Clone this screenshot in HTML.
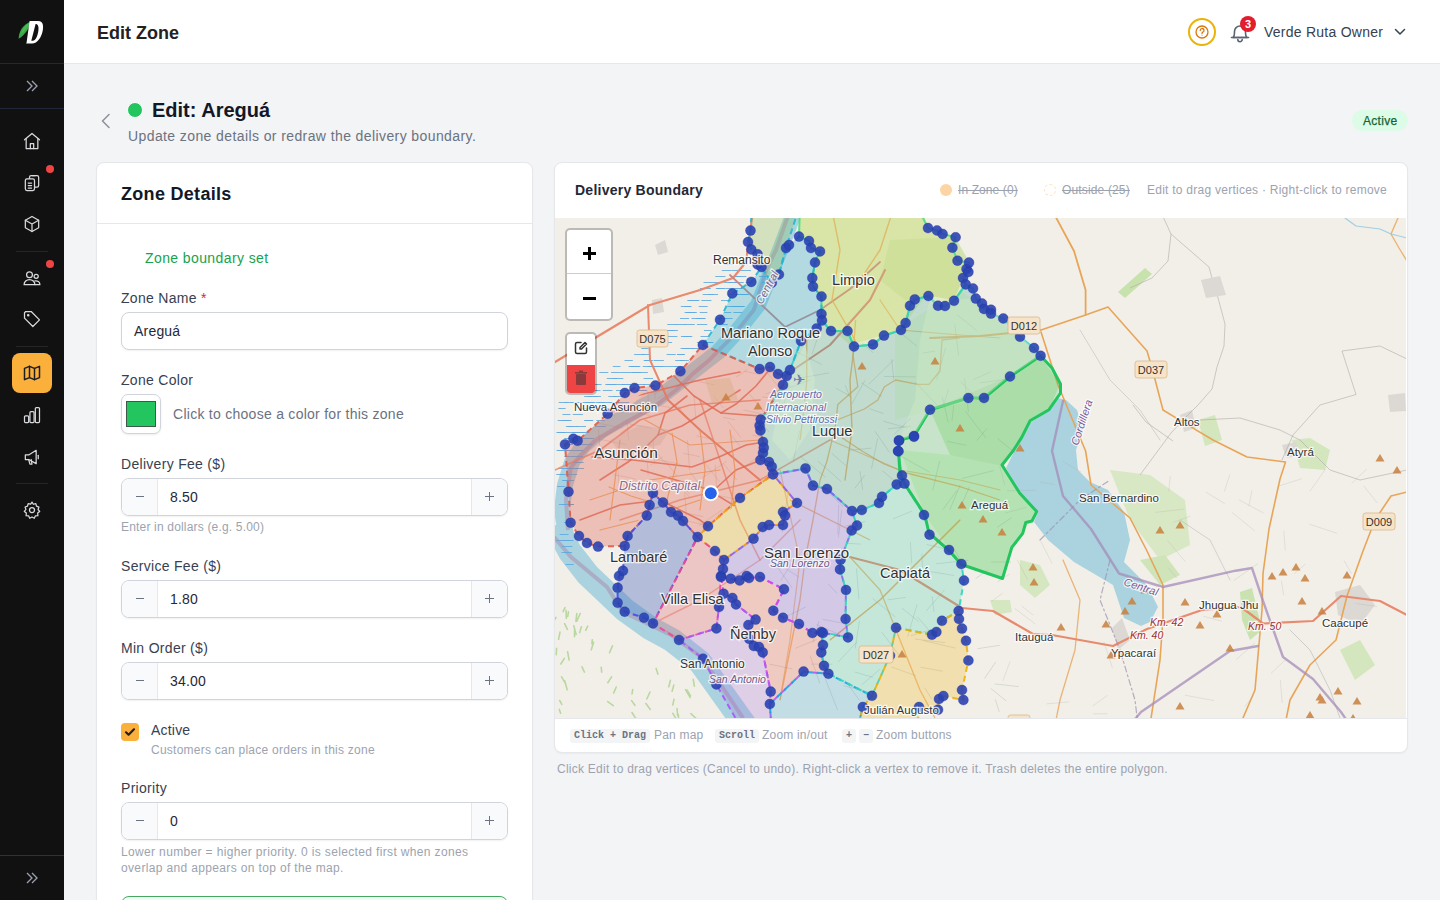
<!DOCTYPE html>
<html><head><meta charset="utf-8">
<style>
*{box-sizing:border-box;margin:0;padding:0}
html,body{width:1440px;height:900px;overflow:hidden;background:#f3f4f6;font-family:"Liberation Sans",sans-serif;color:#374151}
.abs{position:absolute}
#side{position:absolute;left:0;top:0;width:64px;height:900px;background:#111111}
.sdiv{position:absolute;left:0;width:64px;height:1px;background:#1f2937}
.sgd{position:absolute;left:16px;width:32px;height:1px;background:#262626}
.ico{position:absolute;left:22px;width:20px;height:20px}
.rdot{position:absolute;left:46px;width:8px;height:8px;border-radius:50%;background:#ef4444}
#hdr{position:absolute;left:64px;top:0;width:1376px;height:64px;background:#fff;border-bottom:1px solid #e5e7eb}
.t{position:absolute;white-space:nowrap;line-height:1}
.card{position:absolute;background:#fff;border:1px solid #e5e7eb;border-radius:8px;box-shadow:0 1px 2px rgba(0,0,0,.04)}
.lbl{position:absolute;left:24px;font-size:14px;color:#374151;white-space:nowrap;line-height:1}
.inp{position:absolute;left:24px;width:387px;height:38px;border:1px solid #d1d5db;border-radius:8px;background:#fff;box-shadow:0 1px 2px rgba(0,0,0,.06)}
.stp{position:absolute;left:24px;width:387px;height:38px;border:1px solid #d1d5db;border-radius:8px;background:#fff;box-shadow:0 1px 2px rgba(0,0,0,.06);overflow:hidden}
.stp .m,.stp .p{position:absolute;top:0;width:36px;height:36px;background:#f9fafb}
.stp .m{left:0;border-right:1px solid #e5e7eb}
.stp .p{right:0;border-left:1px solid #e5e7eb}
.hint{position:absolute;left:24px;font-size:12px;color:#9ca3af;white-space:nowrap;line-height:16px}
kbd{display:inline-block;font-family:"Liberation Mono",monospace;font-weight:bold;font-size:10px;line-height:14px;height:14px;color:#6b7280;background:#f3f4f6;border-radius:3px;padding:0 4px;vertical-align:top;letter-spacing:0}
</style></head><body>
<!-- SIDEBAR -->
<div id="side">
  <svg class="abs" style="left:16px;top:18px" width="32" height="30" viewBox="0 0 32 30">
    <path d="M2.6 20.8 C2.8 13 7 6.2 15.2 3.4 C13.5 9.5 9.5 16.5 2.6 20.8 Z" fill="#3aa947"/>
    <path d="M5 16 C6.5 10.5 9.5 6.8 14 4.6 C12 9 9 13 5 16Z" fill="#5cc266" opacity="0.6"/>
    <path fill-rule="evenodd" d="M13.6 3 L22.5 3 C26.5 3 27.6 7 26.9 11.5 C25.9 19 21.5 25.6 16 25.6 L10.2 25.6 L10.6 24.6 Z M19.6 6 C22 6 22.9 8.5 22.4 12.5 C21.7 18 19.5 22.8 16.8 22.8 L15.3 22.8 Z" fill="#fff"/>
  </svg>
  <div class="sdiv" style="top:63px"></div>
  <svg class="abs" style="left:25px;top:79px" width="14" height="14" viewBox="0 0 14 14" fill="none" stroke="#9ca3af" stroke-width="1.3"><path d="M2 2l5 5-5 5M7 2l5 5-5 5"/></svg>
  <div class="sdiv" style="top:108px"></div>
  <svg class="ico" style="top:131px" viewBox="0 0 24 24" fill="none" stroke="#d9dadd" stroke-width="1.5" stroke-linecap="round" stroke-linejoin="round"><path d="M3 10.5 12 3l9 7.5"/><path d="M5 9v12h14V9"/><path d="M10 21v-6h4v6"/></svg>
  <div class="rdot" style="top:165px"></div>
  <svg class="ico" style="top:173px" viewBox="0 0 24 24" fill="none" stroke="#d9dadd" stroke-width="1.5" stroke-linecap="round" stroke-linejoin="round"><rect x="9" y="3" width="11" height="14" rx="2"/><rect x="4" y="7" width="11" height="14" rx="2" fill="#111"/><path d="M7.5 12h4M7.5 15h4M7.5 18h4"/><path d="M12 3h4"/></svg>
  <svg class="ico" style="top:214px" viewBox="0 0 24 24" fill="none" stroke="#d9dadd" stroke-width="1.5" stroke-linecap="round" stroke-linejoin="round"><path d="M12 3 20 7.5v9L12 21 4 16.5v-9Z"/><path d="M4 7.5 12 12l8-4.5M12 12v9"/></svg>
  <div class="sgd" style="top:251px"></div>
  <div class="rdot" style="top:260px"></div>
  <svg class="ico" style="top:268px" viewBox="0 0 24 24" fill="none" stroke="#d9dadd" stroke-width="1.5" stroke-linecap="round" stroke-linejoin="round"><circle cx="9" cy="8" r="3.5"/><circle cx="17" cy="10" r="2.5"/><path d="M2.5 20c0-3.5 3-6 6.5-6s6.5 2.5 6.5 6Z"/><path d="M15.5 15.5c3 -0.5 6 1 6 4.5h-6"/></svg>
  <svg class="ico" style="top:309px" viewBox="0 0 24 24" fill="none" stroke="#d9dadd" stroke-width="1.5" stroke-linecap="round" stroke-linejoin="round"><path d="M3 4.5V11l10 10 8-8L11 3H4.5Z"/><circle cx="7.5" cy="7.5" r="0.8" fill="#e5e7eb"/></svg>
  <div class="sgd" style="top:346px"></div>
  <div class="abs" style="left:12px;top:353px;width:40px;height:40px;border-radius:8px;background:#fbb03b"></div>
  <svg class="ico" style="top:363px" viewBox="0 0 24 24" fill="none" stroke="#1f1f1f" stroke-width="1.8" stroke-linecap="round" stroke-linejoin="round"><path d="M3 6.5 9 4l6 2.5L21 4v13.5L15 20l-6-2.5L3 20Z"/><path d="M9 4v13.5M15 6.5V20"/></svg>
  <svg class="ico" style="top:405px" viewBox="0 0 24 24" fill="none" stroke="#d9dadd" stroke-width="1.5" stroke-linecap="round" stroke-linejoin="round"><rect x="3" y="13" width="5" height="8" rx="1.2"/><rect x="9.5" y="8" width="5" height="13" rx="1.2"/><rect x="16" y="3" width="5" height="18" rx="1.2"/></svg>
  <svg class="ico" style="top:447px" viewBox="0 0 24 24" fill="none" stroke="#d9dadd" stroke-width="1.5" stroke-linecap="round" stroke-linejoin="round"><path d="M4 9.5h4L17 4v16l-9-5H4Z"/><path d="M8 15l1.5 5.5h2.5L11 15"/><path d="M19.5 10v4"/></svg>
  <div class="sgd" style="top:483px"></div>
  <svg class="ico" style="top:500px" viewBox="0 0 24 24" fill="none" stroke="#d9dadd" stroke-width="1.5" stroke-linecap="round" stroke-linejoin="round"><circle cx="12" cy="12" r="3"/><path d="M12 2.5l1.6 2.6 3-.7.8 3 2.9 1.1-1 2.9 1.9 2.4-2.4 1.9.3 3.1-3.1.3-1.3 2.8-2.7-1.5-2.7 1.5-1.3-2.8-3.1-.3.3-3.1L2.8 13.7l1.9-2.4-1-2.9 2.9-1.1.8-3 3 .7Z"/></svg>
  <div class="sdiv" style="top:855px;background:#2b323d"></div>
  <svg class="abs" style="left:25px;top:871px" width="14" height="14" viewBox="0 0 14 14" fill="none" stroke="#9ca3af" stroke-width="1.3"><path d="M2 2l5 5-5 5M7 2l5 5-5 5"/></svg>
</div>

<!-- HEADER -->
<div id="hdr">
  <div class="t" style="left:33px;top:24px;font-size:18px;font-weight:bold;color:#222">Edit Zone</div>
  <div class="abs" style="left:1124px;top:18px;width:28px;height:28px;border-radius:50%;border:2px solid #eab308"></div>
  <svg class="abs" style="left:1131px;top:25px" width="14" height="14" viewBox="0 0 14 14" fill="none" stroke="#d97706" stroke-width="1.3" stroke-linecap="round"><circle cx="7" cy="7" r="6"/><path d="M5.2 5.4a1.9 1.9 0 1 1 2.6 1.8c-.5.2-.8.6-.8 1.1v.3"/><circle cx="7" cy="10.3" r=".5" fill="#d97706" stroke="none"/></svg>
  <svg class="abs" style="left:1166px;top:21px" width="20" height="22" viewBox="0 0 20 22" fill="none" stroke="#5b6270" stroke-width="1.6" stroke-linecap="round" stroke-linejoin="round"><path d="M3 16.5c1.5-1 1.5-2.5 1.5-6a5.5 5.5 0 0 1 11 0c0 3.5 0 5 1.5 6Z"/><path d="M1.5 16.5h17"/><path d="M7.8 18.5a2.2 2.2 0 0 0 4.4 0"/></svg>
  <div class="abs" style="left:1176px;top:16px;width:16px;height:16px;border-radius:50%;background:#e11d2e;color:#fff;font-size:11px;font-weight:bold;text-align:center;line-height:16px">3</div>
  <div class="t" style="left:1200px;top:25px;font-size:14px;color:#374151;letter-spacing:0.25px">Verde Ruta Owner</div>
  <svg class="abs" style="left:1330px;top:28px" width="12" height="8" viewBox="0 0 12 8" fill="none" stroke="#374151" stroke-width="1.5" stroke-linecap="round" stroke-linejoin="round"><path d="M1.5 1.5 6 6l4.5-4.5"/></svg>
</div>

<!-- PAGE HEADER -->
<svg class="abs" style="left:100px;top:113px" width="12" height="16" viewBox="0 0 12 16" fill="none" stroke="#8b919b" stroke-width="1.5" stroke-linecap="round" stroke-linejoin="round"><path d="M9 1.5 2.5 8 9 14.5"/></svg>
<div class="abs" style="left:127px;top:102px;width:16px;height:16px;border-radius:50%;background:#22c55e;border:1.5px solid #fff"></div>
<div class="t" style="left:152px;top:100px;font-size:20px;font-weight:bold;color:#111827">Edit: Areguá</div>
<div class="t" style="left:128px;top:129px;font-size:14px;color:#6b7280;letter-spacing:0.4px">Update zone details or redraw the delivery boundary.</div>
<div class="abs" style="left:1352px;top:110px;width:56px;height:21px;border-radius:11px;background:#dcfce7"></div>
<div class="t" style="left:1363px;top:115px;font-size:12px;color:#166534;letter-spacing:0.3px;-webkit-text-stroke:0.25px #166534">Active</div>

<!-- LEFT CARD -->
<div class="card" style="left:96px;top:162px;width:437px;height:780px"></div>
<div class="abs" style="left:97px;top:223px;width:435px;height:1px;background:#e5e7eb"></div>
<div class="t" style="left:121px;top:185px;font-size:18px;font-weight:bold;color:#111827;letter-spacing:0.3px">Zone Details</div>
<div class="t" style="left:145px;top:251px;font-size:14px;color:#16a34a;letter-spacing:0.4px">Zone boundary set</div>

<div class="t" style="left:121px;top:291px;font-size:14px;color:#374151;letter-spacing:0.3px">Zone Name <span style="color:#dc2626">*</span></div>
<div class="inp" style="left:121px;top:312px"></div>
<div class="t" style="left:134px;top:324px;font-size:14px;color:#1f2937;letter-spacing:0.2px">Areguá</div>

<div class="t" style="left:121px;top:373px;font-size:14px;color:#374151;letter-spacing:0.3px">Zone Color</div>
<div class="abs" style="left:121px;top:394px;width:40px;height:40px;border:1px solid #d1d5db;border-radius:7px;background:#fff;box-shadow:0 1px 2px rgba(0,0,0,.08)"></div>
<div class="abs" style="left:126px;top:401px;width:30px;height:26px;background:#22c55e;border:1px solid #3d5a48"></div>
<div class="t" style="left:173px;top:407px;font-size:14px;color:#6b7280;letter-spacing:0.27px">Click to choose a color for this zone</div>

<div class="t" style="left:121px;top:457px;font-size:14px;color:#374151;letter-spacing:0.3px">Delivery Fee ($)</div>
<div class="stp" style="left:121px;top:478px"><div class="m"></div><div class="p"></div></div>
<div class="t" style="left:170px;top:490px;font-size:14px;color:#1f2937;letter-spacing:0.2px">8.50</div>
<div class="hint" style="left:121px;top:519px;letter-spacing:0.18px">Enter in dollars (e.g. 5.00)</div>

<div class="t" style="left:121px;top:559px;font-size:14px;color:#374151;letter-spacing:0.3px">Service Fee ($)</div>
<div class="stp" style="left:121px;top:580px"><div class="m"></div><div class="p"></div></div>
<div class="t" style="left:170px;top:592px;font-size:14px;color:#1f2937;letter-spacing:0.2px">1.80</div>

<div class="t" style="left:121px;top:641px;font-size:14px;color:#374151;letter-spacing:0.3px">Min Order ($)</div>
<div class="stp" style="left:121px;top:662px"><div class="m"></div><div class="p"></div></div>
<div class="t" style="left:170px;top:674px;font-size:14px;color:#1f2937;letter-spacing:0.2px">34.00</div>

<div class="abs" style="left:121px;top:723px;width:18px;height:18px;border-radius:4px;background:#fbb03b"></div>
<svg class="abs" style="left:121px;top:723px" width="18" height="18" viewBox="0 0 18 18" fill="none" stroke="#1f1f1f" stroke-width="2.2" stroke-linecap="round" stroke-linejoin="round"><path d="M5 9.3l2.6 2.4L13 6.3"/></svg>
<div class="t" style="left:151px;top:723px;font-size:14px;color:#374151;letter-spacing:0.2px">Active</div>
<div class="t" style="left:151px;top:744px;font-size:12px;color:#9ca3af;letter-spacing:0.25px">Customers can place orders in this zone</div>

<div class="t" style="left:121px;top:781px;font-size:14px;color:#374151;letter-spacing:0.3px">Priority</div>
<div class="stp" style="left:121px;top:802px"><div class="m"></div><div class="p"></div></div>
<div class="t" style="left:170px;top:814px;font-size:14px;color:#1f2937">0</div>
<div class="hint" style="left:121px;top:844px;letter-spacing:0.35px">Lower number = higher priority. 0 is selected first when zones<br>overlap and appears on top of the map.</div>
<div class="abs" style="left:121px;top:896px;width:387px;height:40px;border:1px solid #45a862;border-radius:8px;background:#f0fdf4"></div>

<div class="abs" style="left:136px;top:496px;width:8px;height:1.3px;background:#6b7280"></div>
<div class="abs" style="left:485px;top:496px;width:9px;height:1.3px;background:#6b7280"></div>
<div class="abs" style="left:489px;top:492px;width:1.3px;height:9px;background:#6b7280"></div>
<div class="abs" style="left:136px;top:598px;width:8px;height:1.3px;background:#6b7280"></div>
<div class="abs" style="left:485px;top:598px;width:9px;height:1.3px;background:#6b7280"></div>
<div class="abs" style="left:489px;top:594px;width:1.3px;height:9px;background:#6b7280"></div>
<div class="abs" style="left:136px;top:680px;width:8px;height:1.3px;background:#6b7280"></div>
<div class="abs" style="left:485px;top:680px;width:9px;height:1.3px;background:#6b7280"></div>
<div class="abs" style="left:489px;top:676px;width:1.3px;height:9px;background:#6b7280"></div>
<div class="abs" style="left:136px;top:820px;width:8px;height:1.3px;background:#6b7280"></div>
<div class="abs" style="left:485px;top:820px;width:9px;height:1.3px;background:#6b7280"></div>
<div class="abs" style="left:489px;top:816px;width:1.3px;height:9px;background:#6b7280"></div>

<!-- MAP CARD -->
<div class="card" style="left:554px;top:162px;width:854px;height:591px;overflow:hidden"></div>
<div class="t" style="left:575px;top:183px;font-size:14px;font-weight:bold;color:#1f2937;letter-spacing:0.25px">Delivery Boundary</div>
<div class="abs" style="left:940px;top:184px;width:12px;height:12px;border-radius:50%;background:#fdd5a5"></div>
<div class="t" style="left:958px;top:184px;font-size:12px;color:#9ca3af;text-decoration:line-through;letter-spacing:0.1px">In Zone (0)</div>
<div class="abs" style="left:1044px;top:184px;width:12px;height:12px;border-radius:50%;border:1px dashed #fde2c0"></div>
<div class="t" style="left:1062px;top:184px;font-size:12px;color:#9ca3af;text-decoration:line-through;letter-spacing:0.15px">Outside (25)</div>
<div class="t" style="left:1147px;top:184px;font-size:12px;color:#9ca3af;letter-spacing:0.25px">Edit to drag vertices · Right-click to remove</div>
<svg class="abs" style="left:555px;top:218px" width="851" height="500" viewBox="555 218 851 500">
<rect x="555" y="218" width="851" height="500" fill="#f2efe9"/>
<polygon points="800.0,205.0 921.0,205.0 928.0,228.0 955.0,237.0 969.0,262.0 963.0,278.0 954.0,300.0 930.0,290.0 900.0,330.0 850.0,345.0 822.0,320.0 821.0,314.0 821.0,296.0 813.0,287.0 812.0,278.0 815.0,262.0 820.0,251.0 809.0,241.0 799.0,236.0" fill="#dde9bd"/>
<polygon points="895.0,330.0 960.0,290.0 1040.0,355.0 1010.0,376.0 984.0,398.0 930.0,410.0 895.0,420.0" fill="#e6f0d6"/>
<polygon points="890.0,240.0 955.0,237.0 969.0,262.0 963.0,278.0 954.0,300.0 930.0,296.0 905.0,300.0 880.0,280.0" fill="#d2e3ad"/>
<polygon points="930.0,410.0 1010.0,376.0 1040.0,356.0 1060.0,384.0 1049.0,410.0 1030.0,421.0 1013.0,451.0 1003.0,466.0 990.0,470.0 950.0,455.0" fill="#cfe6bd"/>
<polygon points="900.0,450.0 950.0,455.0 1003.0,466.0 1020.0,493.0 1037.0,512.0 1012.0,547.0 1002.0,578.0 960.0,565.0 925.0,515.0" fill="#dcecc9"/>
<polygon points="1240.0,592.0 1252.0,588.0 1262.0,630.0 1250.0,640.0 1242.0,620.0" fill="#c9e2b0"/>
<polygon points="1110.0,470.0 1150.0,475.0 1185.0,500.0 1190.0,545.0 1160.0,560.0 1130.0,520.0" fill="#d8e8c4"/>
<polygon points="1292.0,440.0 1310.0,438.0 1330.0,450.0 1325.0,470.0 1300.0,468.0" fill="#d3e6bd"/>
<polygon points="1020.0,560.0 1040.0,565.0 1050.0,585.0 1035.0,598.0 1020.0,585.0" fill="#d5e7c0"/>
<polygon points="1118.0,292.0 1145.0,268.0 1152.0,274.0 1125.0,298.0" fill="#c8e2ae"/>
<polygon points="990.0,600.0 1010.0,600.0 1012.0,612.0 995.0,615.0" fill="#d5e7c0"/>
<polygon points="1085.0,500.0 1110.0,505.0 1120.0,540.0 1100.0,548.0" fill="#d3e6bd"/>
<polygon points="1140.0,560.0 1165.0,555.0 1180.0,575.0 1160.0,585.0" fill="#cfe4b8"/>
<polygon points="1198.0,420.0 1215.0,415.0 1222.0,440.0 1205.0,446.0" fill="#d3e6bd"/>
<polygon points="1340.0,650.0 1360.0,640.0 1375.0,665.0 1355.0,680.0" fill="#d3e6bd"/>
<polygon points="1335.0,592.0 1360.0,585.0 1375.0,605.0 1360.0,625.0 1338.0,615.0" fill="#dcd8d4"/>
<polygon points="1112.0,628.0 1122.0,618.0 1130.0,640.0 1118.0,650.0" fill="#dcd8d4"/>
<polygon points="1180.0,415.0 1192.0,410.0 1196.0,428.0 1184.0,432.0" fill="#dcd8d4"/>
<polygon points="1282.0,445.0 1296.0,442.0 1300.0,456.0 1286.0,458.0" fill="#dcd8d4"/>
<polygon points="655.0,245.0 665.0,240.0 668.0,252.0 658.0,255.0" fill="#dcd8d4"/>
<polygon points="652.0,300.0 662.0,298.0 664.0,312.0 653.0,314.0" fill="#dcd8d4"/>
<polygon points="1388.0,395.0 1405.0,393.0 1406.0,411.0 1390.0,412.0" fill="#dcd8d4"/>
<polygon points="1066.0,400.0 1077.0,410.0 1083.0,429.0 1076.0,450.0 1078.0,470.0 1090.0,482.0 1108.0,490.0 1124.0,512.0 1130.0,540.0 1124.0,562.0 1147.0,585.0 1158.0,607.0 1150.0,622.0 1141.0,626.0 1124.0,618.0 1113.0,585.0 1074.0,562.0 1048.0,540.0 1034.0,522.0 1038.0,512.0 1020.0,493.0 1006.0,468.0 1015.0,450.0 1030.0,423.0 1050.0,409.0 1058.0,398.0" fill="#aad3df"/>
<polyline points="795.0,210.0 780.0,250.0 770.0,275.0 758.0,305.0 738.0,330.0 718.0,352.0 700.0,366.0 682.0,380.0 660.0,397.0 630.0,414.0 602.0,430.0 583.0,446.0 572.0,462.0 565.0,485.0 562.0,510.0 566.0,535.0" fill="none" stroke="#aad3df" stroke-width="16" stroke-linejoin="round"/>
<polyline points="556.0,525.0 570.0,552.0 588.0,575.0 606.0,592.0 625.0,610.0 650.0,628.0 672.0,640.0 700.0,662.0 720.0,690.0 745.0,725.0" fill="none" stroke="#aad3df" stroke-width="24" stroke-linejoin="round"/>
<polyline points="790.0,210.0 776.0,250.0 767.0,268.0 754.0,309.7 731.8,337.4 709.6,359.7 693.0,373.6 676.0,390.0 654.0,407.0 623.4,423.6 595.7,440.0 579.0,457.0 570.7,468.0 566.0,500.0 568.0,530.0" fill="none" stroke="#a99cb8" stroke-width="4" stroke-linejoin="round" opacity="0.7"/>
<polyline points="554.0,537.0 571.0,557.0 607.0,587.0 623.0,612.0 671.0,635.0 701.0,657.0 721.0,685.0 743.0,718.0" fill="none" stroke="#a99cb8" stroke-width="4" stroke-linejoin="round" opacity="0.7"/>
<path d="M683.8 336.5h8.5 M573.4 432.5h7.3 M759.1 276.5h8.0 M704.5 342.5h8.9 M577.7 444.5h9.1 M556.2 474.5h7.3 M639.1 342.5h10.5 M609.3 402.5h10.5 M569.4 468.5h8.6 M561.5 552.5h7.4 M702.7 294.5h10.9 M616.0 390.5h8.2 M585.8 402.5h8.4 M575.4 426.5h10.6 M572.6 456.5h10.4 M721.7 318.5h10.9 M646.4 336.5h10.4 M701.3 300.5h10.1 M564.3 540.5h9.0 M734.6 288.5h7.1 M691.5 318.5h9.4 M688.9 300.5h10.5 M674.3 366.5h10.6 M629.9 372.5h9.1 M564.2 438.5h9.2 M583.7 438.5h9.0 M621.8 390.5h8.0 M679.7 360.5h9.1 M558.7 402.5h8.7 M571.3 432.5h7.2 M562.0 432.5h9.7 M649.5 366.5h10.0 M723.8 264.5h9.7 M608.4 396.5h8.3 M628.6 366.5h8.5 M561.2 420.5h8.5 M585.0 420.5h8.2 M700.5 336.5h8.0 M695.8 318.5h9.8 M717.1 288.5h8.3 M652.8 366.5h10.5 M594.1 384.5h7.5 M571.4 402.5h10.2 M680.5 348.5h9.6 M707.9 294.5h10.2 M663.4 342.5h8.7 M612.6 378.5h10.7 M687.3 300.5h10.8 M564.6 540.5h8.7 M564.1 552.5h7.9 M562.9 480.5h9.7 M578.5 402.5h8.4 M667.3 324.5h9.4 M677.6 354.5h7.2 M561.8 546.5h10.6 M666.6 354.5h9.1 M637.4 390.5h9.4 M634.2 354.5h10.4 M610.9 402.5h8.4 M696.9 324.5h10.3 M716.1 318.5h10.7 M558.9 504.5h7.0 M578.7 444.5h7.2 M660.0 336.5h9.1 M614.2 384.5h10.1 M728.2 258.5h7.5 M699.9 288.5h10.9 M584.2 396.5h8.3 M647.4 366.5h9.3 M624.5 360.5h8.3 M721.0 300.5h9.9 M612.8 366.5h7.7 M637.7 372.5h10.1 M643.6 378.5h9.5 M606.8 384.5h9.0 M680.9 336.5h9.8 M728.3 282.5h8.7 M562.5 540.5h8.5 M556.4 540.5h8.0 M586.2 384.5h10.3 M573.1 450.5h10.2 M565.5 450.5h9.3 M728.2 294.5h7.0 M724.1 312.5h7.2 M709.8 282.5h10.5 M680.8 306.5h10.4 M734.1 306.5h9.7 M563.9 522.5h9.3 M566.8 480.5h7.2 M653.6 360.5h10.3 M666.8 330.5h8.0 M576.5 438.5h8.6 M630.9 366.5h8.4 M599.3 372.5h9.0 M564.4 456.5h9.7 M587.3 408.5h9.6 M736.7 294.5h10.7 M585.5 402.5h9.9 M689.1 312.5h7.8 M563.8 420.5h7.9 M572.8 462.5h8.2 M659.4 336.5h7.1 M593.2 396.5h7.7 M630.2 366.5h10.1 M733.4 312.5h8.9 M567.7 426.5h10.3 M607.1 402.5h10.4 M633.5 384.5h10.8 M589.9 390.5h7.9 M558.5 468.5h10.8 M687.6 312.5h7.7 M567.5 468.5h10.6 M691.4 348.5h8.3 M625.0 390.5h7.3 M741.1 294.5h8.2 M642.7 366.5h9.7 M739.0 264.5h8.7 M584.0 390.5h9.3 M564.4 402.5h8.1 M561.1 540.5h7.4 M557.1 486.5h8.2 M561.4 450.5h10.2 M682.9 348.5h10.8 M556.6 450.5h7.5 M588.0 396.5h9.9 M557.4 450.5h7.7 M565.4 444.5h7.7 M737.3 306.5h7.6 M657.7 366.5h9.4 M584.1 420.5h8.8 M641.3 348.5h7.3 M562.1 468.5h9.2 M666.9 336.5h10.5 M738.4 276.5h8.0 M643.7 360.5h9.2 M653.1 336.5h7.5 M686.1 312.5h8.7 M562.2 480.5h10.0 M611.1 372.5h9.1 M562.4 414.5h8.0 M561.9 504.5h10.8 M631.9 372.5h9.3 M582.6 444.5h9.7 M675.2 360.5h8.9 M578.3 432.5h7.0 M595.8 402.5h8.8 M698.0 318.5h7.1 M598.7 402.5h8.8 M595.2 426.5h10.6 M727.4 306.5h9.5 M730.2 276.5h7.9 M731.8 288.5h10.7 M667.1 366.5h9.8 M730.6 306.5h9.4 M563.6 504.5h10.4 M621.3 390.5h8.9 M703.5 282.5h7.3 M680.0 318.5h9.0 M622.0 384.5h8.2 M613.2 396.5h8.6 M717.8 324.5h9.9 M630.0 366.5h9.1 M557.7 420.5h7.0 M703.9 330.5h7.6 M590.4 384.5h7.8 M699.7 312.5h7.7 M724.8 264.5h7.7 M576.4 390.5h7.1 M602.7 390.5h9.8 M732.0 276.5h8.6 M761.5 282.5h7.9 M725.3 288.5h7.7 M557.8 432.5h7.5 M745.7 282.5h8.1 M667.6 330.5h10.3 M556.4 432.5h7.4 M574.3 462.5h9.4 M726.7 258.5h7.4 M684.2 306.5h7.2 M575.2 450.5h7.8 M563.0 504.5h10.8 M731.6 270.5h9.4 M676.9 354.5h7.5 M620.2 372.5h9.7 M559.0 474.5h10.3 M596.3 420.5h8.5 M606.8 378.5h10.1 M588.0 390.5h7.7 M581.3 390.5h9.8 M741.0 270.5h10.0 M696.9 342.5h9.6 M559.7 534.5h8.8 M641.9 354.5h7.3 M643.3 384.5h7.4 M558.3 408.5h7.3 M721.8 270.5h9.6 M704.8 342.5h7.9 M572.8 414.5h10.1 M580.3 432.5h9.1 M684.6 312.5h7.3 M762.2 282.5h7.8 M590.2 390.5h10.3 M571.8 432.5h10.0 M565.9 426.5h7.4 M580.5 408.5h9.9 M723.7 282.5h8.9 M733.8 282.5h9.9 M621.7 384.5h9.4 M683.8 324.5h11.0 M644.0 360.5h7.3 M674.7 324.5h10.7 M566.3 474.5h10.9 M584.9 438.5h9.1 M636.0 390.5h10.6 M565.5 564.5h8.2 M735.6 294.5h8.2 M593.3 408.5h7.2 M605.3 384.5h10.0 M715.8 288.5h8.6 M715.3 276.5h10.1 M573.0 468.5h10.9 M698.8 306.5h8.9 M587.4 408.5h8.4 M619.1 402.5h10.2 M649.6 342.5h10.2" stroke="#5fa8e0" stroke-width="1" fill="none" opacity="0.85"/>
<path d="M564.4 658.4l-3.6 5.6 M566.1 610.4l0.2 8.0 M573.8 625.7l2.3 8.7 M576.8 613.5l-0.9 7.9 M582.0 666.9l2.4 5.2 M564.6 623.7l2.8 5.6 M601.2 667.3l0.5 4.8 M670.4 680.4l-1.6 6.4 M631.6 700.6l3.3 4.7 M616.2 687.1l-2.5 5.9 M561.6 676.8l3.6 6.4 M656.1 668.4l1.8 5.7 M677.0 708.6l0.7 7.0 M564.7 680.7l2.5 9.0 M611.6 676.9l-3.8 5.8 M580.2 613.5l-3.4 7.6 M574.6 628.5l-0.1 8.2 M567.6 651.7l1.5 8.3 M674.0 699.4l-1.2 5.5 M607.7 701.7l5.6 3.9 M581.4 626.7l-1.7 5.9 M556.6 648.2l-0.3 6.4 M693.2 679.4l1.2 6.7 M685.5 689.7l4.7 7.8 M612.5 645.9l-3.0 6.8 M565.0 607.7l-1.9 4.0 M556.0 617.4l-3.0 5.2 M559.7 700.5l2.1 3.9 M592.3 639.9l-0.4 3.7 M678.2 714.2l0.7 5.9 M568.4 611.8l-0.6 4.6 M559.3 709.4l1.3 3.9 M632.0 712.5l4.6 7.2 M593.6 642.2l-2.3 7.6 M632.7 689.6l-0.7 4.3 M672.9 713.3l4.5 7.8 M673.8 685.1l-1.7 6.1 M560.0 632.1l-1.4 7.2 M690.9 713.6l5.6 5.2 M587.7 626.1l-2.0 4.2 M645.9 703.5l4.4 5.9 M650.0 692.0l-3.2 7.0 M687.0 690.0l3.5 5.9" stroke="#b9d8a0" stroke-width="1.6" fill="none" stroke-linecap="round"/>
<polyline points="555.0,362.0 600.0,335.0 650.0,305.0 700.0,290.0 733.0,278.0 746.0,262.0 752.0,218.0" fill="none" stroke="#e88a6e" stroke-width="2.2" stroke-linejoin="round" stroke-linecap="round" opacity="1"/>
<polyline points="648.0,305.0 650.0,360.0 668.0,400.0 700.0,430.0 760.0,480.0" fill="none" stroke="#e88a6e" stroke-width="2" stroke-linejoin="round" stroke-linecap="round" opacity="1"/>
<polyline points="730.0,275.0 785.0,327.0 820.0,310.0 850.0,289.0 880.0,262.0" fill="none" stroke="#c98a86" stroke-width="1.8" stroke-linejoin="round" stroke-linecap="round" opacity="1"/>
<polyline points="790.0,372.0 830.0,345.0 870.0,300.0 885.0,270.0" fill="none" stroke="#d78a7c" stroke-width="2" stroke-linejoin="round" stroke-linecap="round" opacity="1"/>
<polyline points="555.0,470.0 600.0,450.0 640.0,420.0 690.0,405.0 760.0,400.0" fill="none" stroke="#e88a6e" stroke-width="1.6" stroke-linejoin="round" stroke-linecap="round" opacity="0.8"/>
<polyline points="620.0,520.0 680.0,500.0 760.0,480.0 830.0,440.0" fill="none" stroke="#e88a6e" stroke-width="1.6" stroke-linejoin="round" stroke-linecap="round" opacity="0.7"/>
<polyline points="700.0,400.0 720.0,460.0 740.0,520.0 760.0,560.0" fill="none" stroke="#e88a6e" stroke-width="1.6" stroke-linejoin="round" stroke-linecap="round" opacity="0.7"/>
<polyline points="850.0,557.0 900.0,570.0 962.0,608.0" fill="none" stroke="#e88a6e" stroke-width="2.2" stroke-linejoin="round" stroke-linecap="round" opacity="1"/>
<polyline points="660.0,620.0 700.0,600.0 760.0,560.0 800.0,520.0" fill="none" stroke="#e88a6e" stroke-width="1.4" stroke-linejoin="round" stroke-linecap="round" opacity="0.6"/>
<polyline points="1052.0,210.0 1074.0,251.0 1085.6,290.0 1085.6,315.0 1041.0,330.0 980.0,336.0 930.0,338.0" fill="none" stroke="#e8a558" stroke-width="1.8" stroke-linejoin="round" stroke-linecap="round" opacity="1"/>
<polyline points="1085.6,315.0 1108.0,307.0 1147.0,351.0 1152.0,368.0 1163.0,410.0 1185.5,423.6 1213.0,440.0 1247.0,457.0 1285.5,462.0 1280.0,479.0 1269.0,529.0 1263.0,573.5 1262.0,610.0 1255.0,690.0 1240.0,725.0" fill="none" stroke="#e8a558" stroke-width="1.6" stroke-linejoin="round" stroke-linecap="round" opacity="1"/>
<polyline points="1041.0,332.0 1058.0,385.0 1085.6,451.0 1091.0,485.0 1130.0,518.0 1147.0,551.0 1163.0,585.0 1163.0,618.0 1160.0,660.0 1150.0,725.0" fill="none" stroke="#e8a558" stroke-width="1.6" stroke-linejoin="round" stroke-linecap="round" opacity="1"/>
<polyline points="1407.0,492.0 1391.0,496.0 1375.0,520.0 1363.0,551.0 1347.0,596.0 1336.0,640.0 1310.0,665.0 1290.0,700.0 1285.0,725.0" fill="none" stroke="#e8a558" stroke-width="1.6" stroke-linejoin="round" stroke-linecap="round" opacity="1"/>
<polyline points="1063.0,560.0 1080.0,600.0 1075.0,650.0 1060.0,700.0 1055.0,725.0" fill="none" stroke="#e8a558" stroke-width="1.3" stroke-linejoin="round" stroke-linecap="round" opacity="0.8"/>
<polyline points="832.0,210.0 840.0,250.0 832.0,300.0 855.0,340.0 850.0,380.0 852.0,430.0 845.0,480.0" fill="none" stroke="#e8a558" stroke-width="1.4" stroke-linejoin="round" stroke-linecap="round" opacity="0.8"/>
<polyline points="893.0,210.0 880.0,250.0 860.0,280.0" fill="none" stroke="#e8a558" stroke-width="1.4" stroke-linejoin="round" stroke-linecap="round" opacity="0.8"/>
<polyline points="880.0,300.0 900.0,330.0 960.0,335.0 1000.0,338.0" fill="none" stroke="#e8a558" stroke-width="1.2" stroke-linejoin="round" stroke-linecap="round" opacity="0.7"/>
<polyline points="830.0,440.0 900.0,470.0 960.0,480.0 1000.0,490.0" fill="none" stroke="#e8a558" stroke-width="1.2" stroke-linejoin="round" stroke-linecap="round" opacity="0.6"/>
<polyline points="780.0,470.0 800.0,560.0 790.0,640.0 780.0,700.0" fill="none" stroke="#e8a558" stroke-width="1.2" stroke-linejoin="round" stroke-linecap="round" opacity="0.6"/>
<polyline points="830.0,640.0 880.0,600.0 920.0,560.0 960.0,520.0" fill="none" stroke="#e8a558" stroke-width="1.2" stroke-linejoin="round" stroke-linecap="round" opacity="0.6"/>
<polyline points="1400.0,210.0 1398.0,218.0 1391.0,234.0 1399.0,248.0 1407.0,261.0" fill="none" stroke="#e8a558" stroke-width="1.4" stroke-linejoin="round" stroke-linecap="round" opacity="0.8"/>
<polyline points="962.0,608.0 993.0,611.0 1033.0,634.0 1052.0,635.0 1113.0,646.0 1147.0,629.0 1202.0,610.0 1241.0,607.0 1263.0,623.5 1313.0,621.0 1341.0,596.0 1380.0,601.0 1407.0,615.0" fill="none" stroke="#e88a6e" stroke-width="2.2" stroke-linejoin="round" stroke-linecap="round" opacity="1"/>
<polyline points="1080.0,330.0 1110.0,380.0 1140.0,410.0 1160.0,440.0" fill="none" stroke="#9a9a9a" stroke-width="0.9" stroke-linejoin="round" stroke-linecap="round" opacity="0.4"/>
<polyline points="1180.0,520.0 1210.0,540.0 1230.0,580.0" fill="none" stroke="#9a9a9a" stroke-width="0.9" stroke-linejoin="round" stroke-linecap="round" opacity="0.4"/>
<polyline points="1290.0,630.0 1310.0,650.0 1330.0,690.0 1340.0,718.0" fill="none" stroke="#9a9a9a" stroke-width="0.9" stroke-linejoin="round" stroke-linecap="round" opacity="0.45"/>
<polyline points="1340.0,210.0 1345.0,218.0 1356.0,226.0 1380.0,229.0 1391.0,234.0 1407.0,238.0" fill="none" stroke="#8cc6e0" stroke-width="1.2" stroke-linejoin="round" stroke-linecap="round" opacity="0.8"/>
<polyline points="1063.0,401.0 1052.0,451.0 1063.0,496.0 1091.0,529.0 1119.0,573.5 1163.0,587.0 1235.6,570.7 1252.0,568.0 1263.0,601.0 1283.0,657.0 1313.0,679.0 1341.0,712.0 1350.0,725.0" fill="none" stroke="#a48cb8" stroke-width="2.4" stroke-linejoin="round" stroke-linecap="round" opacity="0.75"/>
<polyline points="1258.0,646.0 1230.0,651.0 1141.0,712.0 1130.0,725.0" fill="none" stroke="#a48cb8" stroke-width="2.4" stroke-linejoin="round" stroke-linecap="round" opacity="0.75"/>
<polyline points="1040.0,540.0 1080.0,500.0 1110.0,480.0" fill="none" stroke="#9c8fae" stroke-width="1.2" stroke-linejoin="round" stroke-linecap="round" opacity="0.7" stroke-dasharray="6 3 2 3"/>
<polyline points="1110.0,560.0 1100.0,600.0 1120.0,650.0 1135.0,700.0 1138.0,725.0" fill="none" stroke="#9c8fae" stroke-width="1.2" stroke-linejoin="round" stroke-linecap="round" opacity="0.7" stroke-dasharray="6 3 2 3"/>
<defs><clipPath id="cpA"><polygon points="702.8,345.0 786.7,376.0 763.0,453.0 773.0,474.4 697.6,537.0 653.0,493.0 624.7,545.9 587.0,543.0 568.5,491.8 565.0,444.4 607.6,413.8 680.4,371.3"/></clipPath></defs>
<g clip-path="url(#cpA)" fill="none" stroke-linecap="round">
<polyline points="654.0,347.0 665.0,367.0 694.0,396.0 721.0,413.0 760.0,416.0 780.0,423.0" stroke="#e0705c" stroke-width="1.6" opacity="0.85"/>
<polyline points="721.0,413.0 736.0,404.0 756.0,386.0 770.0,369.0" stroke="#e0705c" stroke-width="1.6" opacity="0.85"/>
<polyline points="687.0,396.0 665.0,413.0 658.0,435.0 641.0,452.0 628.0,462.0 600.0,480.0" stroke="#e0705c" stroke-width="1.6" opacity="0.85"/>
<polyline points="658.0,435.0 682.0,426.0 707.0,411.0 740.0,390.0" stroke="#e0705c" stroke-width="1.6" opacity="0.85"/>
<polyline points="592.0,457.0 633.0,460.0 692.0,467.0 719.0,457.0 746.0,445.0 758.0,443.0" stroke="#e0705c" stroke-width="1.6" opacity="0.85"/>
<polyline points="641.0,470.0 707.0,489.0 743.0,511.0" stroke="#e0705c" stroke-width="1.6" opacity="0.85"/>
<polyline points="712.0,492.0 736.0,470.0 756.0,462.0" stroke="#e0705c" stroke-width="1.6" opacity="0.85"/>
<polyline points="580.0,520.0 620.0,505.0 660.0,500.0 700.0,520.0 720.0,535.0" stroke="#e0705c" stroke-width="1.6" opacity="0.85"/>
<polyline points="600.0,400.0 640.0,395.0 700.0,380.0 740.0,372.0" stroke="#e0705c" stroke-width="1.6" opacity="0.85"/>
<polyline points="609.0,487.0 631.0,496.0 660.0,505.0" stroke="#eea458" stroke-width="1.2" opacity="0.8"/>
<polyline points="672.0,433.0 677.0,462.0 668.0,496.0 660.0,530.0" stroke="#eea458" stroke-width="1.2" opacity="0.8"/>
<polyline points="700.0,430.0 705.0,470.0 700.0,510.0" stroke="#eea458" stroke-width="1.2" opacity="0.8"/>
<polyline points="620.0,440.0 615.0,480.0 610.0,520.0" stroke="#eea458" stroke-width="1.2" opacity="0.8"/>
<polyline points="590.0,500.0 650.0,480.0 720.0,470.0" stroke="#eea458" stroke-width="1.2" opacity="0.8"/>
<polyline points="730.0,430.0 735.0,470.0 730.0,520.0" stroke="#eea458" stroke-width="1.2" opacity="0.8"/>
<polyline points="645.0,420.0 690.0,445.0 760.0,440.0" stroke="#eea458" stroke-width="1.2" opacity="0.8"/>
<polyline points="600.0,530.0 640.0,520.0 700.0,500.0" stroke="#eea458" stroke-width="1.2" opacity="0.8"/>
<path d="M665.0 460.8l11.8 14.9 M749.6 394.2l14.0 17.7 M736.5 376.9l10.6 -7.2 M683.1 520.3l21.5 4.4 M653.2 441.5l1.6 22.4 M744.7 371.4l13.5 2.7 M620.8 365.4l10.3 12.9 M694.1 395.2l1.6 22.7 M675.0 479.2l14.4 18.1 M655.4 459.2l23.7 4.8 M636.2 401.3l8.7 -6.0 M688.3 379.4l26.4 5.4 M651.2 532.4l14.0 2.8 M764.7 369.4l18.4 23.2 M653.5 373.1l1.8 25.5 M626.7 375.7l8.5 -5.8 M656.1 526.1l1.1 14.9 M591.2 370.8l8.4 10.6 M687.5 440.5l2.1 29.6 M731.6 435.5l7.7 9.7 M658.4 398.3l22.5 -15.4 M774.7 466.7l13.9 2.8 M652.8 513.8l10.6 2.2 M600.7 439.5l24.9 5.1 M639.1 413.3l11.3 2.3 M613.8 474.6l21.6 4.4 M648.1 441.6l16.6 20.9 M598.5 429.5l1.1 16.2 M618.0 469.9l0.9 13.1 M702.1 459.7l17.2 21.7 M696.7 435.9l11.9 2.4 M677.6 405.9l9.4 11.9 M743.0 467.4l16.8 -11.5 M765.1 535.9l1.0 14.5 M687.5 513.4l15.3 3.1 M762.6 396.7l11.2 2.3 M656.4 404.8l13.3 2.7 M647.4 463.0l0.8 11.8 M599.1 441.1l19.1 -13.1 M715.2 465.2l1.5 21.7 M764.0 445.5l19.8 -13.6 M772.2 363.8l19.3 3.9 M723.4 417.4l11.3 2.3 M684.7 492.7l1.8 25.8 M762.2 423.3l17.4 21.9 M752.9 435.1l26.7 5.4 M690.3 472.5l10.9 13.8 M572.6 373.0l22.3 4.5 M778.6 518.4l14.7 -10.0 M724.4 464.6l12.0 15.1 M683.7 453.4l15.9 3.2 M588.4 364.0l19.5 4.0 M699.0 525.7l23.1 -15.8 M647.3 385.8l1.4 20.3 M728.3 421.7l12.4 15.6 M620.7 432.9l11.5 -7.9 M660.5 505.1l2.0 27.5 M650.7 465.0l11.7 -8.0 M598.3 423.1l23.7 4.8 M769.5 409.8l0.9 12.2 M669.0 526.6l11.0 13.8 M679.2 481.0l10.2 12.9 M744.0 410.1l23.1 4.7 M629.0 423.8l22.4 4.5 M655.1 394.2l12.2 -8.3 M599.6 368.4l18.6 3.8 M702.3 477.9l24.1 -16.5 M713.7 395.9l9.4 11.8 M720.0 495.9l13.3 2.7 M627.2 422.2l1.3 17.8" stroke="#b08a80" stroke-width="0.7" opacity="0.35"/>
</g>
<polygon points="610.0,440.0 640.0,425.0 670.0,430.0 660.0,445.0 620.0,452.0" fill="#c9c0bd" opacity="0.35"/>
<polygon points="705.0,380.0 730.0,378.0 738.0,400.0 712.0,403.0" fill="#d7d3a5" opacity="0.45"/>
<polyline points="855.6,320.0 853.0,355.6 857.8,386.7 837.8,404.4 835.6,424.4 831.0,444.4 826.7,462.0 820.0,480.0 813.0,520.0 805.0,560.0 800.0,600.0 790.0,650.0 780.0,700.0" fill="none" stroke="#e8a558" stroke-width="1.3" opacity="0.75" stroke-linejoin="round"/>
<polyline points="842.0,437.8 862.0,451.0 884.0,464.0 906.7,473.0 960.0,486.7 1000.0,500.0" fill="none" stroke="#e8a558" stroke-width="1.3" opacity="0.75" stroke-linejoin="round"/>
<polyline points="837.0,420.0 864.4,409.0 877.8,400.0 884.4,386.7 895.6,380.0 917.8,384.4 929.0,384.4 940.0,371.0 942.0,340.0 960.0,337.8" fill="none" stroke="#e8a558" stroke-width="1.3" opacity="0.75" stroke-linejoin="round"/>
<polyline points="806.7,340.0 806.7,382.0 804.0,409.0 800.0,440.0" fill="none" stroke="#e8a558" stroke-width="1.3" opacity="0.75" stroke-linejoin="round"/>
<polyline points="850.0,557.0 880.0,590.0 900.0,640.0 920.0,690.0 935.0,718.0" fill="none" stroke="#e8a558" stroke-width="1.3" opacity="0.75" stroke-linejoin="round"/>
<polyline points="830.0,640.0 880.0,600.0 920.0,560.0 960.0,520.0" fill="none" stroke="#e8a558" stroke-width="1.3" opacity="0.75" stroke-linejoin="round"/>
<polyline points="790.0,500.0 830.0,520.0 870.0,540.0" fill="none" stroke="#e8a558" stroke-width="1.3" opacity="0.75" stroke-linejoin="round"/>
<path d="M917.0 604.5l-9.4 32.3 M942.8 671.3l-22.3 -4.1 M987.5 570.1l-11.9 8.5 M883.2 421.2l24.3 6.8 M782.9 410.2l6.1 -32.5 M948.5 389.1l-4.4 14.5 M915.8 376.9l-32.0 -0.4 M826.1 409.7l-31.9 3.6 M843.6 685.7l26.8 6.7 M825.1 678.2l12.5 31.9 M976.6 440.6l10.2 -12.1 M812.1 354.1l8.2 -24.5 M780.7 580.8l10.0 -16.3 M960.1 507.9l9.3 -21.1 M935.0 351.1l-12.4 2.0 M945.0 642.6l-29.9 -3.5 M860.6 544.1l-13.1 -0.8 M819.8 683.4l-9.7 -27.7 M984.5 678.6l11.3 -16.7 M895.4 617.0l-22.7 -18.4 M955.4 648.1l-32.9 -7.7 M800.1 456.1l25.4 21.2 M854.8 672.0l18.4 5.4 M849.7 395.7l-13.6 -7.3 M931.6 698.8l-6.9 -11.1 M997.1 527.4l14.5 -9.7 M910.7 635.7l20.9 -6.0 M792.3 668.9l-22.9 -4.8 M964.5 378.3l3.9 33.6 M918.7 621.6l-17.2 -13.7 M812.8 642.6l6.2 -21.5 M999.8 645.3l-22.2 3.4 M887.4 599.9l18.5 -2.5 M868.8 384.2l24.9 -24.2 M991.2 562.0l19.8 -0.1 M799.6 430.8l-6.4 31.3 M859.5 620.8l-4.3 27.6 M926.1 611.1l18.5 -21.3 M841.8 509.7l-3.4 27.7 M844.6 679.9l15.0 20.5 M782.5 532.4l0.1 -27.4 M881.8 632.2l18.2 24.3 M856.5 568.3l2.4 31.0 M857.0 641.9l-19.0 20.3 M994.7 683.9l24.0 2.7 M816.6 639.5l-21.2 8.8 M932.1 596.3l2.0 15.8 M951.7 544.9l11.0 18.7 M917.2 616.6l18.7 21.6 M786.1 389.2l25.1 -9.7 M828.2 583.8l8.8 9.5 M883.7 413.7l-14.2 -5.0 M849.8 397.2l-4.5 -12.0 M882.4 470.7l19.5 16.5 M832.3 664.2l-21.3 -0.1 M841.3 481.7l-23.3 -20.6 M862.3 343.3l10.7 9.3 M899.9 455.6l29.7 16.6 M960.1 485.1l-10.3 24.7 M861.3 382.6l20.6 14.1 M990.6 688.2l15.6 12.7 M976.6 330.4l-19.5 -15.7 M915.3 382.1l22.3 23.6 M862.7 489.7l-2.8 -18.5 M993.9 470.5l-32.0 8.0 M911.1 426.1l-23.2 2.8 M871.4 448.1l-23.2 2.3 M843.0 506.5l-18.9 -18.3 M877.6 438.4l-6.1 30.4 M782.9 527.0l5.0 -33.1 M952.0 420.9l1.7 -15.5 M997.5 438.5l17.8 14.4 M921.9 553.4l0.6 14.7 M947.3 441.3l19.3 4.1 M845.3 526.1l19.8 -4.5 M943.9 548.6l-17.3 -4.1 M880.2 669.1l-18.7 15.9 M783.2 618.0l22.7 -11.1 M935.8 563.9l32.8 -3.7 M864.8 475.0l-9.9 13.3 M845.2 637.1l-28.6 -12.6 M932.8 490.1l6.8 -29.2 M980.3 382.8l24.4 -3.3 M889.5 452.4l-14.5 -21.0 M958.6 355.3l-3.8 -30.6 M954.2 575.5l-28.2 -4.6 M995.3 699.4l4.0 12.5 M965.3 411.1l20.7 26.9 M936.7 379.8l8.8 -31.9 M812.9 555.9l13.5 -8.1 M916.9 346.1l-16.1 -13.0 M795.8 351.3l25.9 13.2 M973.3 379.7l17.5 -8.0 M912.0 511.1l-19.1 7.8 M792.3 588.0l-15.4 -21.6 M891.3 666.9l24.7 8.9 M837.9 534.1l0.8 -29.3 M893.7 379.5l-2.0 -20.4 M942.1 396.3l6.2 26.3 M798.8 577.1l-12.5 -8.1 M910.7 418.3l-16.5 16.1 M851.1 624.7l-28.2 -5.3 M791.8 385.8l-26.4 8.2 M829.1 372.9l-26.9 4.7 M960.5 381.7l14.3 14.2 M831.7 453.3l15.1 13.1 M864.9 380.5l-13.1 23.5 M957.0 490.4l-14.2 19.2 M910.4 542.1l1.3 21.1 M801.3 342.3l-3.8 -12.3" fill="none" stroke="#8a9a90" stroke-width="0.6" opacity="0.45"/>
<path d="M1185.2 561.5l-17.8 -21.1 M1002.6 593.2l-10.8 8.0 M1221.7 621.1l-18.2 -4.8 M1281.4 580.7l2.3 14.6 M1095.2 497.2l28.6 1.1 M1236.2 659.7l18.9 -17.0 M1040.7 541.3l11.5 22.3 M1168.7 491.5l1.7 -15.7 M1112.5 668.3l-8.7 -26.6 M1351.7 483.4l15.1 -14.4 M1009.4 574.1l-11.7 7.8 M1238.7 499.7l24.8 13.3 M1081.2 472.0l-18.8 -10.9 M1007.0 490.8l28.6 -0.6 M1168.0 567.5l8.8 10.5 M1231.9 512.3l22.7 18.5 M1021.7 606.0l11.5 9.1 M1107.3 713.7l-14.2 0.2 M1282.2 703.0l-1.9 -22.9 M1017.2 559.7l10.4 20.1 M1309.9 491.3l15.8 -22.6 M1233.7 580.6l24.3 -17.1 M1229.8 474.5l-5.5 17.1 M1173.4 522.3l16.8 -6.1 M1035.5 624.2l-20.8 -15.8 M1010.2 661.3l-7.4 19.6 M1283.8 530.8l1.5 19.6 M1092.4 706.2l15.2 -10.9 M1344.0 560.5l7.5 13.1 M1337.3 533.4l-28.1 -9.3 M1069.1 701.9l-22.8 2.0 M1004.7 484.9l-4.9 -18.4 M1244.6 706.8l8.9 -11.5 M1224.8 503.6l-18.8 -11.4 M1278.4 486.1l23.5 -7.4 M1305.7 563.8l-11.4 9.8 M1286.2 659.1l-15.2 14.3 M1039.7 481.9l14.9 2.7 M1251.9 490.6l-3.0 15.7 M1005.2 513.1l21.3 -5.9 M1155.3 512.4l28.9 -3.3 M1214.2 700.6l-29.4 -5.4 M1355.6 603.4l21.4 3.2 M1363.8 486.1l13.6 17.0 M1120.1 647.6l2.5 13.6" fill="none" stroke="#a8a4a0" stroke-width="0.6" opacity="0.4"/>
<polyline points="1160.0,210.0 1171.0,234.0 1209.0,267.0 1212.0,278.0 1217.0,294.0 1225.0,324.0 1224.0,346.0 1217.0,367.0 1212.0,389.0 1198.0,405.0 1184.0,419.0 1171.0,433.0 1157.0,452.0 1140.0,475.0" fill="none" stroke="#a8a4a0" stroke-width="0.9" opacity="0.6"/>
<polyline points="1171.0,234.0 1168.0,261.0 1152.0,278.0 1130.0,288.0" fill="none" stroke="#a8a4a0" stroke-width="0.9" opacity="0.6"/>
<polyline points="1342.0,351.0 1380.0,346.0 1407.0,359.0" fill="none" stroke="#a8a4a0" stroke-width="0.9" opacity="0.6"/>
<polyline points="1342.0,351.0 1356.0,394.5 1320.0,405.0 1293.0,435.0 1282.0,460.0" fill="none" stroke="#a8a4a0" stroke-width="0.9" opacity="0.6"/>
<polyline points="1133.0,405.0 1146.0,422.0 1173.0,441.0" fill="none" stroke="#a8a4a0" stroke-width="0.9" opacity="0.6"/>
<polyline points="1200.0,420.0 1240.0,418.0 1280.0,430.0 1300.0,440.0" fill="none" stroke="#a8a4a0" stroke-width="0.9" opacity="0.6"/>
<polyline points="1300.0,440.0 1330.0,470.0 1360.0,480.0 1407.0,470.0" fill="none" stroke="#a8a4a0" stroke-width="0.9" opacity="0.6"/>
<polygon points="1201.0,280.0 1220.0,276.0 1226.0,295.0 1206.0,298.0" fill="#dcd8d4"/>
<polygon points="748.0,242.0 750.5,230.6 752.0,205.0 800.0,205.0 786.0,248.0 778.9,274.5 771.8,282.7 761.5,267.0 757.6,264.5 757.6,254.3 751.3,249.5" fill="#8cc060" fill-opacity="0.3" stroke="#22b8cf" stroke-width="2" stroke-opacity="0.9" stroke-dasharray="6 4" stroke-linejoin="round"/>
<polygon points="799.0,236.6 800.0,205.0 921.0,205.0 923.5,219.0 928.0,228.0 937.0,230.5 942.6,234.0 955.6,237.3 952.4,247.7 957.5,260.7 969.0,262.6 966.5,269.0 968.4,272.0 963.0,278.0 965.7,284.4 954.0,300.8 945.0,306.0 938.0,305.7 928.4,296.0 914.8,299.4 910.0,305.7 905.6,323.0 901.0,330.0 884.0,335.6 873.0,344.4 854.0,346.5 847.5,331.0 831.0,331.0 822.0,320.5 821.5,314.0 821.5,296.5 813.0,286.6 812.3,278.0 815.0,262.5 820.0,251.4 811.0,248.0 809.0,241.0" fill="#c8d860" fill-opacity="0.24" stroke="#4ade80" stroke-width="2" stroke-opacity="0.9" stroke-linejoin="round"/>
<polygon points="801.0,341.0 816.7,328.4 822.0,320.5 831.0,331.0 847.5,331.0 854.0,346.5 873.0,344.4 884.0,335.6 901.0,330.0 905.6,323.0 910.0,305.7 914.8,299.4 928.4,296.0 938.0,305.7 945.0,306.0 954.0,300.8 965.7,284.4 973.0,288.5 975.8,298.6 982.0,303.5 984.0,309.0 991.0,309.7 991.0,313.6 1003.3,318.5 1020.0,336.7 1034.0,348.0 1040.6,355.8 1010.0,376.5 984.0,398.0 968.4,398.0 930.0,409.7 914.0,436.7 899.0,440.7 898.0,451.0 902.0,475.5 896.7,484.4 882.0,496.7 879.0,503.0 861.8,510.0 852.0,511.0 827.0,489.0 813.0,485.6 805.5,468.4 773.0,474.4 771.8,466.7 769.0,462.0 760.4,460.0 763.0,453.0 763.8,447.8 763.0,442.0 760.4,430.4 759.6,425.6 760.7,419.6 783.0,385.0 786.7,376.0 790.0,370.0" fill="#3fa888" fill-opacity="0.27" stroke="#2dd4bf" stroke-width="2" stroke-opacity="0.8" stroke-linejoin="round"/>
<polygon points="702.8,345.0 720.0,319.7 732.3,293.4 751.3,281.9 761.5,267.0 771.8,282.7 778.9,274.5 786.0,248.0 789.0,245.0 799.0,236.6 809.0,241.0 811.0,248.0 820.0,251.4 815.0,262.5 812.3,278.0 813.0,286.6 821.5,296.5 821.5,314.0 822.0,320.5 816.7,328.4 801.0,341.0 790.0,370.0 786.7,376.0 778.0,374.0 770.0,367.0 759.6,369.0" fill="#22a8cf" fill-opacity="0.3" stroke="#22b8cf" stroke-width="2" stroke-opacity="0.9" stroke-dasharray="6 4" stroke-linejoin="round"/>
<polygon points="702.8,345.0 759.6,369.0 770.0,367.0 778.0,374.0 786.7,376.0 783.0,385.0 760.7,419.6 759.6,425.6 760.4,430.4 763.0,442.0 763.8,447.8 763.0,453.0 760.4,460.0 769.0,462.0 771.8,466.7 773.0,474.4 740.0,498.0 708.0,526.3 697.6,537.0 683.0,521.0 678.0,515.6 671.0,512.0 663.0,502.5 653.0,493.0 649.6,505.0 646.8,515.6 627.6,536.0 624.7,545.9 598.0,546.6 587.0,543.0 579.0,536.0 570.6,522.7 568.5,491.8 565.0,444.4 573.4,438.8 577.6,440.8 607.6,413.8 624.8,393.0 634.5,388.0 655.4,385.5 680.4,371.3" fill="#e0604e" fill-opacity="0.33" stroke="#e05a4a" stroke-width="2" stroke-opacity="0.9" stroke-dasharray="6 4" stroke-linejoin="round"/>
<polygon points="773.0,474.4 797.0,503.0 783.0,512.0 785.0,515.6 783.0,525.0 769.0,525.0 762.7,527.0 753.5,538.7 724.0,560.0 715.0,551.0 697.6,537.0 708.0,526.3 740.0,498.0" fill="#e0b020" fill-opacity="0.3" stroke="#f59e0b" stroke-width="2" stroke-opacity="0.9" stroke-dasharray="6 4" stroke-linejoin="round"/>
<polygon points="773.0,474.4 805.5,468.4 813.0,485.6 827.0,489.0 852.0,511.0 857.0,525.5 851.7,530.5 840.6,559.7 840.0,569.4 846.0,590.0 845.6,619.0 848.0,637.4 823.0,633.0 812.4,633.0 799.0,624.0 783.0,617.8 773.3,610.7 784.0,589.3 760.0,577.0 749.0,578.0 746.7,576.0 739.6,580.4 730.7,578.7 721.0,576.0 723.0,569.0 724.0,560.0 753.5,538.7 762.7,527.0 769.0,525.0 783.0,525.0 785.0,515.6 783.0,512.0 797.0,503.0" fill="#8b6ee0" fill-opacity="0.3" stroke="#8b5cf6" stroke-width="2" stroke-opacity="0.9" stroke-dasharray="6 4" stroke-linejoin="round"/>
<polygon points="653.0,493.0 649.6,505.0 646.8,515.6 627.6,536.0 624.7,545.9 623.0,570.8 619.0,576.0 617.6,587.8 617.6,602.8 624.7,611.7 644.0,617.7 653.0,623.4 697.6,537.0 683.0,521.0 678.0,515.6 671.0,512.0 663.0,502.5" fill="#5570c0" fill-opacity="0.4" stroke="#4f46e5" stroke-width="2" stroke-opacity="0.9" stroke-dasharray="6 4" stroke-linejoin="round"/>
<polygon points="697.6,537.0 715.0,551.0 724.0,560.0 723.0,569.0 721.0,576.0 719.0,607.0 716.4,628.4 679.0,640.0 653.0,623.4" fill="#e05868" fill-opacity="0.28" stroke="#ec4899" stroke-width="2" stroke-opacity="0.9" stroke-dasharray="6 4" stroke-linejoin="round"/>
<polygon points="721.0,577.0 730.7,578.7 739.6,580.4 746.7,576.0 749.0,578.0 760.0,577.0 784.0,589.3 773.3,610.7 783.0,617.8 799.0,624.0 812.4,633.0 821.3,632.0 823.0,645.0 821.3,652.4 824.0,665.8 828.4,673.8 803.6,671.6 769.8,704.0 770.7,691.6 762.7,652.4 759.0,647.0 753.8,646.0 749.3,639.0 748.4,625.0 755.6,619.6 736.0,604.4 732.4,598.0 723.6,593.8" fill="#e66a5a" fill-opacity="0.28" stroke="#d946ef" stroke-width="2" stroke-opacity="0.9" stroke-dasharray="6 4" stroke-linejoin="round"/>
<polygon points="679.0,640.0 716.4,628.4 719.0,607.0 723.6,593.8 732.4,598.0 736.0,604.4 755.6,619.6 748.4,625.0 749.3,639.0 753.8,646.0 759.0,647.0 762.7,652.4 770.7,691.6 769.8,704.0 772.0,735.0 745.0,735.0 716.4,684.4 703.0,658.7" fill="#a66fe0" fill-opacity="0.25" stroke="#a855f7" stroke-width="2" stroke-opacity="0.9" stroke-dasharray="6 4" stroke-linejoin="round"/>
<polygon points="769.8,704.0 803.6,671.6 828.4,673.8 872.0,695.8 862.8,707.0 856.0,735.0 772.0,735.0" fill="#38a8d8" fill-opacity="0.25" stroke="#0ea5e9" stroke-width="2" stroke-opacity="0.9" stroke-dasharray="6 4" stroke-linejoin="round"/>
<polygon points="852.0,511.0 861.8,510.0 879.0,503.0 882.0,496.7 896.7,484.4 902.0,475.5 904.5,483.6 924.0,515.0 929.5,534.7 949.0,550.0 961.4,564.0 964.0,580.5 958.6,611.0 942.0,620.8 936.4,632.0 932.0,634.7 896.0,627.7 890.0,655.5 872.0,695.8 828.4,673.8 824.0,665.8 821.3,652.4 823.0,645.0 821.3,632.0 848.0,637.4 845.6,619.0 846.0,590.0 840.0,569.4 840.6,559.7 851.7,530.5 857.0,525.5" fill="#40cfb0" fill-opacity="0.25" stroke="#2dd4bf" stroke-width="2" stroke-opacity="0.9" stroke-dasharray="6 4" stroke-linejoin="round"/>
<polygon points="896.0,627.7 932.0,634.7 936.4,632.0 942.0,620.8 958.6,611.0 959.0,619.0 962.0,628.6 966.0,640.8 968.4,660.5 962.0,690.0 963.4,700.0 943.4,696.0 939.0,699.0 938.0,709.7 919.0,707.0 917.0,735.0 856.0,735.0 862.8,707.0 872.0,695.8 890.0,655.5" fill="#f0b830" fill-opacity="0.3" stroke="#eab308" stroke-width="2" stroke-opacity="0.9" stroke-dasharray="6 4" stroke-linejoin="round"/>
<polygon points="1040.6,355.8 1052.0,368.0 1060.5,384.0 1060.5,393.0 1049.0,409.7 1030.0,420.8 1021.7,437.4 1013.0,451.0 1002.0,465.0 1019.6,493.0 1036.7,511.6 1032.0,521.0 1025.8,522.5 1022.7,533.4 1011.8,547.4 1002.5,578.5 961.4,564.5 949.0,550.5 929.0,533.0 924.7,514.7 904.5,483.6 900.0,474.0 898.5,451.3 899.0,440.4 914.0,436.0 930.0,409.7 968.4,398.0 984.0,398.0 1010.0,376.5" fill="#2fbf5f" fill-opacity="0.22" stroke="#22c55e" stroke-width="3" stroke-opacity="1" stroke-linejoin="round"/>
<polygon points="930.0,298.0 954.0,300.0 975.0,298.0 1003.0,318.0 1040.0,356.0 1010.0,376.0 984.0,398.0 930.0,410.0 914.0,436.0 899.0,440.0 915.0,400.0 920.0,340.0" fill="#d6efc4" opacity="0.35"/>
<polygon points="785.0,378.0 805.0,345.0 815.0,380.0 810.0,430.0 790.0,460.0 772.0,440.0" fill="#d8f0d0" opacity="0.4"/>
<g fill="#2a42b3" fill-opacity="0.9" stroke="#1e3399" stroke-opacity="0.4" stroke-width="0.8"><circle cx="565" cy="444.4" r="5"/><circle cx="568.5" cy="491.8" r="5"/><circle cx="570.6" cy="522.7" r="5"/><circle cx="573.4" cy="438.8" r="5"/><circle cx="577.6" cy="440.8" r="5"/><circle cx="579" cy="536" r="5"/><circle cx="587" cy="543" r="5"/><circle cx="598" cy="546.6" r="5"/><circle cx="607.6" cy="413.8" r="5"/><circle cx="617.6" cy="587.8" r="5"/><circle cx="617.6" cy="602.8" r="5"/><circle cx="619" cy="576" r="5"/><circle cx="623" cy="570.8" r="5"/><circle cx="624.7" cy="545.9" r="5"/><circle cx="624.7" cy="611.7" r="5"/><circle cx="624.8" cy="393" r="5"/><circle cx="627.6" cy="536" r="5"/><circle cx="634.5" cy="388" r="5"/><circle cx="644" cy="617.7" r="5"/><circle cx="646.8" cy="515.6" r="5"/><circle cx="649.6" cy="505" r="5"/><circle cx="653" cy="493" r="5"/><circle cx="653" cy="623.4" r="5"/><circle cx="655.4" cy="385.5" r="5"/><circle cx="663" cy="502.5" r="5"/><circle cx="671" cy="512" r="5"/><circle cx="678" cy="515.6" r="5"/><circle cx="679" cy="640" r="5"/><circle cx="680.4" cy="371.3" r="5"/><circle cx="683" cy="521" r="5"/><circle cx="697.6" cy="537" r="5"/><circle cx="702.8" cy="345" r="5"/><circle cx="703" cy="658.7" r="5"/><circle cx="708" cy="526.3" r="5"/><circle cx="715" cy="551" r="5"/><circle cx="716.4" cy="628.4" r="5"/><circle cx="716.4" cy="684.4" r="5"/><circle cx="719" cy="607" r="5"/><circle cx="720" cy="319.7" r="5"/><circle cx="721" cy="576" r="5"/><circle cx="721" cy="577" r="5"/><circle cx="723" cy="569" r="5"/><circle cx="723.6" cy="593.8" r="5"/><circle cx="724" cy="560" r="5"/><circle cx="730.7" cy="578.7" r="5"/><circle cx="732.3" cy="293.4" r="5"/><circle cx="732.4" cy="598" r="5"/><circle cx="736" cy="604.4" r="5"/><circle cx="739.6" cy="580.4" r="5"/><circle cx="740" cy="498" r="5"/><circle cx="746.7" cy="576" r="5"/><circle cx="748" cy="242" r="5"/><circle cx="748.4" cy="625" r="5"/><circle cx="749" cy="578" r="5"/><circle cx="749.3" cy="639" r="5"/><circle cx="750.5" cy="230.6" r="5"/><circle cx="751.3" cy="249.5" r="5"/><circle cx="751.3" cy="281.9" r="5"/><circle cx="753.5" cy="538.7" r="5"/><circle cx="753.8" cy="646" r="5"/><circle cx="755.6" cy="619.6" r="5"/><circle cx="757.6" cy="254.3" r="5"/><circle cx="757.6" cy="264.5" r="5"/><circle cx="759" cy="647" r="5"/><circle cx="759.6" cy="369" r="5"/><circle cx="759.6" cy="425.6" r="5"/><circle cx="760" cy="577" r="5"/><circle cx="760.4" cy="430.4" r="5"/><circle cx="760.4" cy="460" r="5"/><circle cx="760.7" cy="419.6" r="5"/><circle cx="761.5" cy="267" r="5"/><circle cx="762.7" cy="527" r="5"/><circle cx="762.7" cy="652.4" r="5"/><circle cx="763" cy="442" r="5"/><circle cx="763" cy="453" r="5"/><circle cx="763.8" cy="447.8" r="5"/><circle cx="769" cy="462" r="5"/><circle cx="769" cy="525" r="5"/><circle cx="769.8" cy="704" r="5"/><circle cx="770" cy="367" r="5"/><circle cx="770.7" cy="691.6" r="5"/><circle cx="771.8" cy="282.7" r="5"/><circle cx="771.8" cy="466.7" r="5"/><circle cx="773" cy="474.4" r="5"/><circle cx="773.3" cy="610.7" r="5"/><circle cx="778" cy="374" r="5"/><circle cx="778.9" cy="274.5" r="5"/><circle cx="783" cy="385" r="5"/><circle cx="783" cy="512" r="5"/><circle cx="783" cy="525" r="5"/><circle cx="783" cy="617.8" r="5"/><circle cx="784" cy="589.3" r="5"/><circle cx="785" cy="515.6" r="5"/><circle cx="786" cy="248" r="5"/><circle cx="786.7" cy="376" r="5"/><circle cx="789" cy="245" r="5"/><circle cx="790" cy="370" r="5"/><circle cx="797" cy="503" r="5"/><circle cx="799" cy="236.6" r="5"/><circle cx="799" cy="624" r="5"/><circle cx="801" cy="341" r="5"/><circle cx="803.6" cy="671.6" r="5"/><circle cx="805.5" cy="468.4" r="5"/><circle cx="809" cy="241" r="5"/><circle cx="811" cy="248" r="5"/><circle cx="812.3" cy="278" r="5"/><circle cx="812.4" cy="633" r="5"/><circle cx="813" cy="286.6" r="5"/><circle cx="813" cy="485.6" r="5"/><circle cx="815" cy="262.5" r="5"/><circle cx="816.7" cy="328.4" r="5"/><circle cx="820" cy="251.4" r="5"/><circle cx="821.3" cy="632" r="5"/><circle cx="821.3" cy="652.4" r="5"/><circle cx="821.5" cy="296.5" r="5"/><circle cx="821.5" cy="314" r="5"/><circle cx="822" cy="320.5" r="5"/><circle cx="823" cy="633" r="5"/><circle cx="823" cy="645" r="5"/><circle cx="824" cy="665.8" r="5"/><circle cx="827" cy="489" r="5"/><circle cx="828.4" cy="673.8" r="5"/><circle cx="831" cy="331" r="5"/><circle cx="840" cy="569.4" r="5"/><circle cx="840.6" cy="559.7" r="5"/><circle cx="845.6" cy="619" r="5"/><circle cx="846" cy="590" r="5"/><circle cx="847.5" cy="331" r="5"/><circle cx="848" cy="637.4" r="5"/><circle cx="851.7" cy="530.5" r="5"/><circle cx="852" cy="511" r="5"/><circle cx="854" cy="346.5" r="5"/><circle cx="857" cy="525.5" r="5"/><circle cx="861.8" cy="510" r="5"/><circle cx="862.8" cy="707" r="5"/><circle cx="872" cy="695.8" r="5"/><circle cx="873" cy="344.4" r="5"/><circle cx="879" cy="503" r="5"/><circle cx="882" cy="496.7" r="5"/><circle cx="884" cy="335.6" r="5"/><circle cx="890" cy="655.5" r="5"/><circle cx="896" cy="627.7" r="5"/><circle cx="896.7" cy="484.4" r="5"/><circle cx="898" cy="451" r="5"/><circle cx="898.5" cy="451.3" r="5"/><circle cx="899" cy="440.4" r="5"/><circle cx="899" cy="440.7" r="5"/><circle cx="901" cy="330" r="5"/><circle cx="902" cy="475.5" r="5"/><circle cx="904.5" cy="483.6" r="5"/><circle cx="905.6" cy="323" r="5"/><circle cx="910" cy="305.7" r="5"/><circle cx="914" cy="436" r="5"/><circle cx="914" cy="436.7" r="5"/><circle cx="914.8" cy="299.4" r="5"/><circle cx="919" cy="707" r="5"/><circle cx="924" cy="515" r="5"/><circle cx="928" cy="228" r="5"/><circle cx="928.4" cy="296" r="5"/><circle cx="929.5" cy="534.7" r="5"/><circle cx="930" cy="409.7" r="5"/><circle cx="932" cy="634.7" r="5"/><circle cx="936.4" cy="632" r="5"/><circle cx="937" cy="230.5" r="5"/><circle cx="938" cy="305.7" r="5"/><circle cx="938" cy="709.7" r="5"/><circle cx="939" cy="699" r="5"/><circle cx="942" cy="620.8" r="5"/><circle cx="942.6" cy="234" r="5"/><circle cx="943.4" cy="696" r="5"/><circle cx="945" cy="306" r="5"/><circle cx="949" cy="550" r="5"/><circle cx="952.4" cy="247.7" r="5"/><circle cx="954" cy="300.8" r="5"/><circle cx="955.6" cy="237.3" r="5"/><circle cx="957.5" cy="260.7" r="5"/><circle cx="958.6" cy="611" r="5"/><circle cx="959" cy="619" r="5"/><circle cx="961.4" cy="564" r="5"/><circle cx="962" cy="628.6" r="5"/><circle cx="962" cy="690" r="5"/><circle cx="963" cy="278" r="5"/><circle cx="963.4" cy="700" r="5"/><circle cx="964" cy="580.5" r="5"/><circle cx="965.7" cy="284.4" r="5"/><circle cx="966" cy="640.8" r="5"/><circle cx="966.5" cy="269" r="5"/><circle cx="968.4" cy="272" r="5"/><circle cx="968.4" cy="398" r="5"/><circle cx="968.4" cy="660.5" r="5"/><circle cx="969" cy="262.6" r="5"/><circle cx="973" cy="288.5" r="5"/><circle cx="975.8" cy="298.6" r="5"/><circle cx="982" cy="303.5" r="5"/><circle cx="984" cy="309" r="5"/><circle cx="984" cy="398" r="5"/><circle cx="991" cy="309.7" r="5"/><circle cx="991" cy="313.6" r="5"/><circle cx="1003.3" cy="318.5" r="5"/><circle cx="1010" cy="376.5" r="5"/><circle cx="1020" cy="336.7" r="5"/><circle cx="1034" cy="348" r="5"/><circle cx="1040.6" cy="355.8" r="5"/></g>
<circle cx="710.8" cy="493.2" r="8" fill="#fff"/><circle cx="710.8" cy="493.2" r="6" fill="#2563eb"/>
<text x="793" y="385" font-family="Liberation Sans" font-size="15" fill="#6a7ab8">✈</text>
<g fill="#c8803e" opacity="0.85"><path d="M721.5 400.5L726 393L730.5 400.5Z"/><path d="M753.5 409.5L758 402L762.5 409.5Z"/><path d="M857.5 369.5L862 362L866.5 369.5Z"/><path d="M930.5 364.5L935 357L939.5 364.5Z"/><path d="M955.5 431.5L960 424L964.5 431.5Z"/><path d="M1015.5 451.5L1020 444L1024.5 451.5Z"/><path d="M957.5 508.5L962 501L966.5 508.5Z"/><path d="M978.5 522.5L983 515L987.5 522.5Z"/><path d="M997.5 535.5L1002 528L1006.5 535.5Z"/><path d="M1028.5 570.5L1033 563L1037.5 570.5Z"/><path d="M1029.5 585.5L1034 578L1038.5 585.5Z"/><path d="M1056.5 630.5L1061 623L1065.5 630.5Z"/><path d="M1101.5 627.5L1106 620L1110.5 627.5Z"/><path d="M1106.5 658.5L1111 651L1115.5 658.5Z"/><path d="M1140.5 593.5L1145 586L1149.5 593.5Z"/><path d="M1120.5 614.5L1125 607L1129.5 614.5Z"/><path d="M1180.5 605.5L1185 598L1189.5 605.5Z"/><path d="M1195.5 628.5L1200 621L1204.5 628.5Z"/><path d="M1212.5 617.5L1217 610L1221.5 617.5Z"/><path d="M1267.5 579.5L1272 572L1276.5 579.5Z"/><path d="M1278.5 575.5L1283 568L1287.5 575.5Z"/><path d="M1291.5 570.5L1296 563L1300.5 570.5Z"/><path d="M1300.5 581.5L1305 574L1309.5 581.5Z"/><path d="M1297.5 604.5L1302 597L1306.5 604.5Z"/><path d="M1317.5 614.5L1322 607L1326.5 614.5Z"/><path d="M1342.5 578.5L1347 571L1351.5 578.5Z"/><path d="M1375.5 461.5L1380 454L1384.5 461.5Z"/><path d="M1392.5 473.5L1397 466L1401.5 473.5Z"/><path d="M1175.5 528.5L1180 521L1184.5 528.5Z"/><path d="M1155.5 533.5L1160 526L1164.5 533.5Z"/><path d="M1127.5 604.5L1132 597L1136.5 604.5Z"/><path d="M1225.5 651.5L1230 644L1234.5 651.5Z"/><path d="M1333.5 694.5L1338 687L1342.5 694.5Z"/><path d="M1352.5 704.5L1357 697L1361.5 704.5Z"/><path d="M1348.5 721.5L1353 714L1357.5 721.5Z"/><path d="M1305.5 718.5L1310 711L1314.5 718.5Z"/><path d="M1317.5 703.5L1322 696L1326.5 703.5Z"/><path d="M1175.5 709.5L1180 702L1184.5 709.5Z"/><path d="M1315.5 700.5L1320 693L1324.5 700.5Z"/><path d="M897.5 657.5L902 650L906.5 657.5Z"/></g>
<g font-family="Liberation Sans">
<text x="713" y="264" font-size="12" fill="#333" text-anchor="start" font-weight="normal" letter-spacing="0" stroke="#fff" stroke-width="2.5" stroke-opacity="0.75" paint-order="stroke">Remansito</text>
<text x="832" y="285" font-size="14.5" fill="#333" text-anchor="start" font-weight="normal" letter-spacing="0" stroke="#fff" stroke-width="2.5" stroke-opacity="0.75" paint-order="stroke">Limpio</text>
<text x="721" y="338" font-size="14.5" fill="#333" text-anchor="start" font-weight="normal" letter-spacing="0" stroke="#fff" stroke-width="2.5" stroke-opacity="0.75" paint-order="stroke">Mariano Roque</text>
<text x="748" y="356" font-size="14.5" fill="#333" text-anchor="start" font-weight="normal" letter-spacing="0" stroke="#fff" stroke-width="2.5" stroke-opacity="0.75" paint-order="stroke">Alonso</text>
<text x="574" y="411" font-size="11.5" fill="#333" text-anchor="start" font-weight="normal" letter-spacing="0" stroke="#fff" stroke-width="2.5" stroke-opacity="0.75" paint-order="stroke">Nueva Asunción</text>
<text x="594" y="458" font-size="15.5" fill="#333" text-anchor="start" font-weight="normal" letter-spacing="0" stroke="#fff" stroke-width="2.5" stroke-opacity="0.75" paint-order="stroke">Asunción</text>
<text x="619" y="490" font-size="12.5" fill="#8a6a8e" font-style="italic" text-anchor="start" font-weight="normal" letter-spacing="0" stroke="#fff" stroke-width="2.5" stroke-opacity="0.75" paint-order="stroke">Distrito Capital</text>
<text x="812" y="436" font-size="14.5" fill="#333" text-anchor="start" font-weight="normal" letter-spacing="0" stroke="#fff" stroke-width="2.5" stroke-opacity="0.75" paint-order="stroke">Luque</text>
<text x="770" y="398" font-size="10.5" fill="#5b6bb0" font-style="italic" text-anchor="start" font-weight="normal" letter-spacing="0" stroke="#fff" stroke-width="2.5" stroke-opacity="0.75" paint-order="stroke">Aeropuerto</text>
<text x="766" y="411" font-size="10.5" fill="#5b6bb0" font-style="italic" text-anchor="start" font-weight="normal" letter-spacing="0" stroke="#fff" stroke-width="2.5" stroke-opacity="0.75" paint-order="stroke">Internacional</text>
<text x="766" y="423" font-size="10.5" fill="#5b6bb0" font-style="italic" text-anchor="start" font-weight="normal" letter-spacing="0" stroke="#fff" stroke-width="2.5" stroke-opacity="0.75" paint-order="stroke">Silvio Pettirossi</text>
<text x="610" y="562" font-size="14.5" fill="#333" text-anchor="start" font-weight="normal" letter-spacing="0" stroke="#fff" stroke-width="2.5" stroke-opacity="0.75" paint-order="stroke">Lambaré</text>
<text x="764" y="558" font-size="15" fill="#333" text-anchor="start" font-weight="normal" letter-spacing="0" stroke="#fff" stroke-width="2.5" stroke-opacity="0.75" paint-order="stroke">San Lorenzo</text>
<text x="770" y="567" font-size="10.5" fill="#6a5a8a" font-style="italic" text-anchor="start" font-weight="normal" letter-spacing="0" stroke="#fff" stroke-width="2.5" stroke-opacity="0.75" paint-order="stroke">San Lorenzo</text>
<text x="661" y="604" font-size="14.5" fill="#333" text-anchor="start" font-weight="normal" letter-spacing="0" stroke="#fff" stroke-width="2.5" stroke-opacity="0.75" paint-order="stroke">Villa Elisa</text>
<text x="730" y="639" font-size="14.5" fill="#333" text-anchor="start" font-weight="normal" letter-spacing="0" stroke="#fff" stroke-width="2.5" stroke-opacity="0.75" paint-order="stroke">Ñemby</text>
<text x="680" y="668" font-size="12" fill="#333" text-anchor="start" font-weight="normal" letter-spacing="0" stroke="#fff" stroke-width="2.5" stroke-opacity="0.75" paint-order="stroke">San Antonio</text>
<text x="709" y="683" font-size="10.5" fill="#6a5a8a" font-style="italic" text-anchor="start" font-weight="normal" letter-spacing="0" stroke="#fff" stroke-width="2.5" stroke-opacity="0.75" paint-order="stroke">San Antonio</text>
<text x="880" y="578" font-size="14.5" fill="#333" text-anchor="start" font-weight="normal" letter-spacing="0" stroke="#fff" stroke-width="2.5" stroke-opacity="0.75" paint-order="stroke">Capiatá</text>
<text x="971" y="509" font-size="11.5" fill="#333" text-anchor="start" font-weight="normal" letter-spacing="0" stroke="#fff" stroke-width="2.5" stroke-opacity="0.75" paint-order="stroke">Areguá</text>
<text x="1079" y="502" font-size="11.5" fill="#333" text-anchor="start" font-weight="normal" letter-spacing="0" stroke="#fff" stroke-width="2.5" stroke-opacity="0.75" paint-order="stroke">San Bernardino</text>
<text x="1174" y="426" font-size="11.5" fill="#333" text-anchor="start" font-weight="normal" letter-spacing="0" stroke="#fff" stroke-width="2.5" stroke-opacity="0.75" paint-order="stroke">Altos</text>
<text x="1287" y="456" font-size="11.5" fill="#333" text-anchor="start" font-weight="normal" letter-spacing="0" stroke="#fff" stroke-width="2.5" stroke-opacity="0.75" paint-order="stroke">Atyrá</text>
<text x="1015" y="641" font-size="11.5" fill="#333" text-anchor="start" font-weight="normal" letter-spacing="0" stroke="#fff" stroke-width="2.5" stroke-opacity="0.75" paint-order="stroke">Itauguá</text>
<text x="1111" y="657" font-size="11.5" fill="#333" text-anchor="start" font-weight="normal" letter-spacing="0" stroke="#fff" stroke-width="2.5" stroke-opacity="0.75" paint-order="stroke">Ypacaraí</text>
<text x="1199" y="609" font-size="11.5" fill="#333" text-anchor="start" font-weight="normal" letter-spacing="0" stroke="#fff" stroke-width="2.5" stroke-opacity="0.75" paint-order="stroke">Jhugua Jhu</text>
<text x="1322" y="627" font-size="11.5" fill="#333" text-anchor="start" font-weight="normal" letter-spacing="0" stroke="#fff" stroke-width="2.5" stroke-opacity="0.75" paint-order="stroke">Caacupé</text>
<text x="864" y="714" font-size="11.5" fill="#333" text-anchor="start" font-weight="normal" letter-spacing="0" stroke="#fff" stroke-width="2.5" stroke-opacity="0.75" paint-order="stroke">Julián Augusto</text>
<text x="1078" y="446" font-size="11" fill="#7a5a9a" font-style="italic" text-anchor="start" font-weight="normal" letter-spacing="0" transform="rotate(-72 1078 446)" stroke="#fff" stroke-width="2.5" stroke-opacity="0.75" paint-order="stroke">Cordillera</text>
<text x="1123" y="585" font-size="11" fill="#7a5a9a" font-style="italic" text-anchor="start" font-weight="normal" letter-spacing="0" transform="rotate(18 1123 585)" stroke="#fff" stroke-width="2.5" stroke-opacity="0.75" paint-order="stroke">Central</text>
<text x="762" y="305" font-size="11" fill="#7a6a8a" font-style="italic" text-anchor="start" font-weight="normal" letter-spacing="0" transform="rotate(-62 762 305)" stroke="#fff" stroke-width="2.5" stroke-opacity="0.75" paint-order="stroke">Central</text>
<text x="1150" y="626" font-size="10.5" fill="#a03030" font-style="italic" text-anchor="start" font-weight="normal" letter-spacing="0" stroke="#fff" stroke-width="2.5" stroke-opacity="0.75" paint-order="stroke">Km. 42</text>
<text x="1130" y="639" font-size="10.5" fill="#a03030" font-style="italic" text-anchor="start" font-weight="normal" letter-spacing="0" stroke="#fff" stroke-width="2.5" stroke-opacity="0.75" paint-order="stroke">Km. 40</text>
<text x="1248" y="630" font-size="10.5" fill="#a03030" font-style="italic" text-anchor="start" font-weight="normal" letter-spacing="0" stroke="#fff" stroke-width="2.5" stroke-opacity="0.75" paint-order="stroke">Km. 50</text>
</g>
<rect x="637" y="330" width="31" height="17" rx="2.5" fill="#f7e4c8" stroke="#d8b88a" stroke-width="0.8"/>
<text x="652.5" y="342.5" font-family="Liberation Sans" font-size="11" fill="#333" text-anchor="middle">D075</text>
<rect x="1008" y="317" width="32" height="17" rx="2.5" fill="#f7e4c8" stroke="#d8b88a" stroke-width="0.8"/>
<text x="1024.0" y="329.5" font-family="Liberation Sans" font-size="11" fill="#333" text-anchor="middle">D012</text>
<rect x="1135" y="361" width="32" height="17" rx="2.5" fill="#f7e4c8" stroke="#d8b88a" stroke-width="0.8"/>
<text x="1151.0" y="373.5" font-family="Liberation Sans" font-size="11" fill="#333" text-anchor="middle">D037</text>
<rect x="1363" y="513" width="32" height="17" rx="2.5" fill="#f7e4c8" stroke="#d8b88a" stroke-width="0.8"/>
<text x="1379.0" y="525.5" font-family="Liberation Sans" font-size="11" fill="#333" text-anchor="middle">D009</text>
<rect x="859" y="646" width="34" height="17" rx="2.5" fill="#f7e4c8" stroke="#d8b88a" stroke-width="0.8"/>
<text x="876.0" y="658.5" font-family="Liberation Sans" font-size="11" fill="#333" text-anchor="middle">D027</text>
<rect x="1008" y="715" width="22" height="17" rx="2.5" fill="#f7e4c8" stroke="#d8b88a" stroke-width="0.8"/>
<text x="1019.0" y="727.5" font-family="Liberation Sans" font-size="11" fill="#333" text-anchor="middle"></text>
</svg>
<!-- map controls -->
<div class="abs" style="left:565px;top:228px;width:48px;height:93px;border:2px solid rgba(0,0,0,.22);border-radius:5px;background:#fff;background-clip:padding-box"></div>
<div class="abs" style="left:567px;top:273px;width:44px;height:1px;background:#ccc"></div>
<div class="abs" style="left:583px;top:252px;width:13px;height:2.6px;background:#000"></div>
<div class="abs" style="left:588.2px;top:246.8px;width:2.6px;height:13px;background:#000"></div>
<div class="abs" style="left:583px;top:297px;width:13px;height:2.6px;background:#000"></div>
<div class="abs" style="left:565px;top:332px;width:32px;height:63px;border:2px solid rgba(0,0,0,.22);border-radius:5px;background:#fff;background-clip:padding-box;overflow:hidden"><div style="position:absolute;left:0;top:31px;width:28px;height:28px;background:#ef4444"></div></div>
<svg class="abs" style="left:573px;top:340px" width="16" height="16" viewBox="0 0 16 16" fill="none" stroke="#333" stroke-width="1.5" stroke-linecap="round" stroke-linejoin="round"><path d="M8 2.5H4a1.5 1.5 0 0 0-1.5 1.5v8A1.5 1.5 0 0 0 4 13.5h8a1.5 1.5 0 0 0 1.5-1.5V8"/><path d="M12 2.5l1.5 1.5L8.5 9H7V7.5Z"/></svg>
<svg class="abs" style="left:574px;top:370px" width="14" height="16" viewBox="0 0 14 16" fill="#8a3a3a"><rect x="2" y="4" width="10" height="11" rx="1"/><rect x="1" y="2" width="12" height="1.6"/><rect x="5" y="0.5" width="4" height="1.6"/></svg>
<!-- footer -->
<div class="abs" style="left:555px;top:718px;width:852px;height:1px;background:#e5e7eb"></div>
<div class="abs" style="left:570px;top:729px;height:14px;white-space:nowrap"><kbd>Click + Drag</kbd></div>
<div class="t" style="left:654px;top:729px;font-size:12px;color:#9ca3af;letter-spacing:0.2px">Pan map</div>
<div class="abs" style="left:715px;top:729px;height:14px;white-space:nowrap"><kbd>Scroll</kbd></div>
<div class="t" style="left:762px;top:729px;font-size:12px;color:#9ca3af;letter-spacing:0.2px">Zoom in/out</div>
<div class="abs" style="left:842px;top:729px;height:14px;white-space:nowrap"><kbd>+</kbd></div>
<div class="abs" style="left:859px;top:729px;height:14px;white-space:nowrap"><kbd>−</kbd></div>
<div class="t" style="left:876px;top:729px;font-size:12px;color:#9ca3af;letter-spacing:0.2px">Zoom buttons</div>
<div class="t" style="left:557px;top:763px;font-size:12px;color:#9ca3af;letter-spacing:0.25px">Click Edit to drag vertices (Cancel to undo). Right-click a vertex to remove it. Trash deletes the entire polygon.</div>

</body></html>
